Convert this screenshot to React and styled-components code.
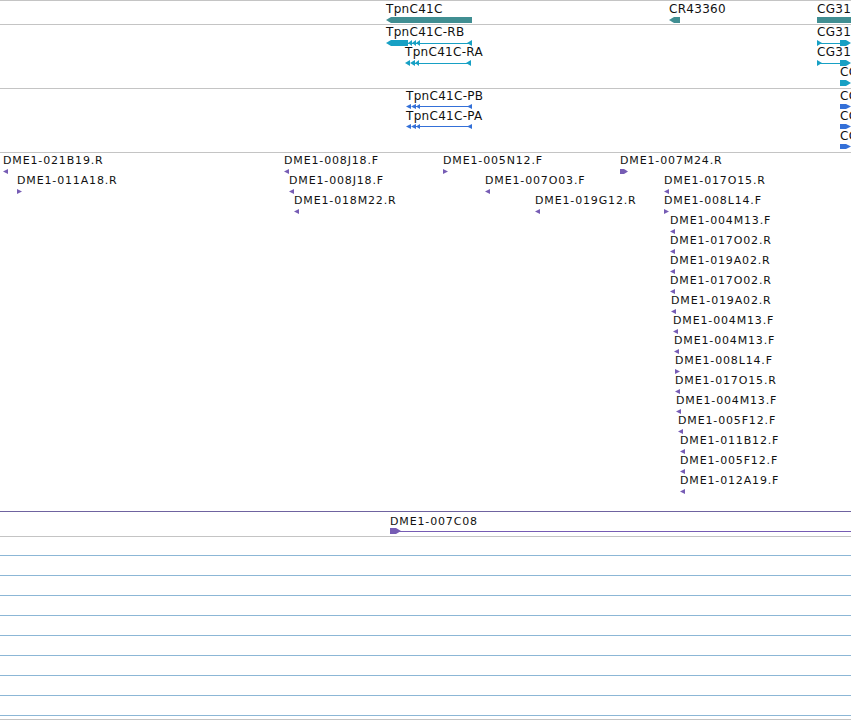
import React from 'react';
import styled, { createGlobalStyle } from 'styled-components';

const GlobalStyle = createGlobalStyle`
  html, body {
    margin: 0;
    padding: 0;
    background: #fff;
    overflow: hidden;
  }
  body {
    font-family: "DejaVu Sans", "Liberation Sans", sans-serif;
  }
`;

const Browser = styled.div`
  width: 851px;
  height: 720px;
  overflow: hidden;
  border-top: 1px solid #c4c4c4;
  display: flex;
  flex-direction: column;
`;

const Track = styled.div`
  box-sizing: border-box;
  height: ${(p) => p.$height}px;
  padding-top: ${(p) => p.$pad || 0}px;
  border-bottom: 1px solid ${(p) => p.$line || '#c4c4c4'};
  display: flex;
  flex-direction: column;
  flex-shrink: 0;
`;

const Row = styled.div`
  position: relative;
  height: ${(p) => p.$h}px;
  flex-shrink: 0;
`;

const Feature = styled.div`
  position: absolute;
  top: 0;
  display: flex;
  flex-direction: column;
  align-items: flex-start;
`;

const GeneLabel = styled.span`
  font-size: 12px;
  line-height: 14px;
  height: 14px;
  padding-top: ${(p) => p.$pad || 0}px;
  letter-spacing: 0.3px;
  white-space: nowrap;
  color: #111;
`;

const CloneLabel = styled.span`
  font-size: 11px;
  line-height: 13px;
  height: 13px;
  padding-top: ${(p) => p.$pad || 0}px;
  letter-spacing: 0.85px;
  white-space: nowrap;
  color: #111;
`;

const GlyphSvg = styled.svg`
  display: block;
  margin-top: ${(p) => p.$gap || 0}px;
  overflow: visible;
`;

const GridGap = styled.div`
  height: 18px;
  flex-shrink: 0;
`;

const GridLine = styled.div`
  box-sizing: border-box;
  height: ${(p) => p.$h || 20}px;
  border-top: 1px solid #8cb7d6;
  border-bottom: ${(p) => (p.$last ? '1px solid #c4c4c4' : 'none')};
  flex-shrink: 0;
`;

const COLORS = {
  gene: '#408e92',
  mrna: '#17a0c4',
  protein: '#3470d8',
  clone: '#765cb4',
};

const triPoints = (x, w, h, dir) =>
  dir === 'L'
    ? `${x},${h / 2} ${x + w},0 ${x + w},${h}`
    : `${x},0 ${x + w},${h / 2} ${x},${h}`;

const exonPoints = (x, w, h, dir) => {
  const t = Math.min(5, w / 2);
  return dir === 'L'
    ? `${x},${h / 2} ${x + t},0 ${x + w},0 ${x + w},${h} ${x + t},${h}`
    : `${x},0 ${x + w - t},0 ${x + w},${h / 2} ${x + w - t},${h} ${x},${h}`;
};

const Glyph = ({ width, height, color, parts, gap }) => {
  const mid = Math.floor(height / 2) + 0.5;
  return (
    <GlyphSvg width={width} height={height} $gap={gap}>
      {parts.map((p, i) => {
        if (p.k === 'line')
          return (
            <line key={i} x1={p.x1} x2={p.x2} y1={mid} y2={mid}
              stroke={color} strokeWidth="1" />
          );
        if (p.k === 'bar')
          return <rect key={i} x={p.x} y={0} width={p.w} height={height} fill={color} />;
        if (p.k === 'tri')
          return <polygon key={i} points={triPoints(p.x, p.w, height, p.d)} fill={color} />;
        return <polygon key={i} points={exonPoints(p.x, p.w, height, p.d)} fill={color} />;
      })}
    </GlyphSvg>
  );
};

const rbParts = [
  { k: 'line', x1: 20, x2: 86 },
  { k: 'exon', x: 0, w: 22, d: 'L' },
  { k: 'tri', x: 22, w: 4, d: 'L' },
  { k: 'tri', x: 26, w: 4, d: 'L' },
  { k: 'tri', x: 30, w: 4, d: 'L' },
  { k: 'tri', x: 81, w: 5, d: 'L' },
];

const shortParts = [
  { k: 'line', x1: 8, x2: 66 },
  { k: 'tri', x: 0, w: 5, d: 'L' },
  { k: 'tri', x: 5, w: 5, d: 'L' },
  { k: 'tri', x: 10, w: 4, d: 'L' },
  { k: 'tri', x: 61, w: 5, d: 'L' },
];

const cgParts = [
  { k: 'line', x1: 2, x2: 26 },
  { k: 'tri', x: 0, w: 5, d: 'R' },
  { k: 'exon', x: 23, w: 11, d: 'R' },
];

const cgHead = [{ k: 'exon', x: 0, w: 11, d: 'R' }];

const genes = [
  { x: 386, name: 'TpnC41C', w: 86, parts: [{ k: 'exon', x: 0, w: 86, d: 'L' }] },
  { x: 669, name: 'CR43360', w: 11, parts: [{ k: 'exon', x: 0, w: 11, d: 'L' }] },
  { x: 817, name: 'CG31', w: 40, parts: [{ k: 'bar', x: 0, w: 40 }] },
];

const transcripts = [
  [
    { x: 386, name: 'TpnC41C-RB', w: 86, parts: rbParts },
    { x: 817, name: 'CG31', w: 34, parts: cgParts },
  ],
  [
    { x: 405, name: 'TpnC41C-RA', w: 66, parts: shortParts },
    { x: 817, name: 'CG31', w: 34, parts: cgParts },
  ],
  [{ x: 840, name: 'CG', w: 11, parts: cgHead }],
];

const proteins = [
  [
    { x: 406, name: 'TpnC41C-PB', w: 66, parts: shortParts },
    { x: 840, name: 'CG', w: 11, parts: cgHead },
  ],
  [
    { x: 406, name: 'TpnC41C-PA', w: 66, parts: shortParts },
    { x: 840, name: 'CG', w: 11, parts: cgHead },
  ],
  [{ x: 840, name: 'CG', w: 11, parts: cgHead }],
];

const clones = [
  [
    { x: 3, n: 'DME1-021B19.R', d: 'L' },
    { x: 284, n: 'DME1-008J18.F', d: 'L' },
    { x: 443, n: 'DME1-005N12.F', d: 'R' },
    { x: 620, n: 'DME1-007M24.R', d: 'R', w: 8 },
  ],
  [
    { x: 17, n: 'DME1-011A18.R', d: 'R' },
    { x: 289, n: 'DME1-008J18.F', d: 'L' },
    { x: 485, n: 'DME1-007O03.F', d: 'L' },
    { x: 664, n: 'DME1-017O15.R', d: 'L' },
  ],
  [
    { x: 294, n: 'DME1-018M22.R', d: 'L' },
    { x: 535, n: 'DME1-019G12.R', d: 'L' },
    { x: 664, n: 'DME1-008L14.F', d: 'R' },
  ],
  [{ x: 670, n: 'DME1-004M13.F', d: 'L' }],
  [{ x: 670, n: 'DME1-017O02.R', d: 'L' }],
  [{ x: 670, n: 'DME1-019A02.R', d: 'L' }],
  [{ x: 670, n: 'DME1-017O02.R', d: 'L' }],
  [{ x: 671, n: 'DME1-019A02.R', d: 'L' }],
  [{ x: 673, n: 'DME1-004M13.F', d: 'L' }],
  [{ x: 674, n: 'DME1-004M13.F', d: 'L' }],
  [{ x: 675, n: 'DME1-008L14.F', d: 'R' }],
  [{ x: 675, n: 'DME1-017O15.R', d: 'L' }],
  [{ x: 676, n: 'DME1-004M13.F', d: 'L' }],
  [{ x: 678, n: 'DME1-005F12.F', d: 'L' }],
  [{ x: 680, n: 'DME1-011B12.F', d: 'L' }],
  [{ x: 680, n: 'DME1-005F12.F', d: 'L' }],
  [{ x: 680, n: 'DME1-012A19.F', d: 'L' }],
];

const cloneParts = (c) =>
  c.w
    ? [{ k: 'exon', x: 0, w: c.w, d: c.d }]
    : [{ k: 'tri', x: 0, w: 5, d: c.d }];

const GeneRows = ({ rows, color, glyphH, rowH }) =>
  rows.map((items, r) => (
    <Row key={r} $h={rowH}>
      {items.map((g, i) => (
        <Feature key={i} style={{ left: g.x }}>
          <GeneLabel>{g.name}</GeneLabel>
          <Glyph width={g.w} height={glyphH} color={color} parts={g.parts} gap={1} />
        </Feature>
      ))}
    </Row>
  ));

export default function App() {
  return (
    <>
      <GlobalStyle />
      <Browser>
        <Track $height={24}>
          <Row $h={23}>
            {genes.map((g, i) => (
              <Feature key={i} style={{ left: g.x }}>
                <GeneLabel $pad={1}>{g.name}</GeneLabel>
                <Glyph width={g.w} height={6} color={COLORS.gene} parts={g.parts} gap={1} />
              </Feature>
            ))}
          </Row>
        </Track>

        <Track $height={64}>
          <GeneRows rows={transcripts} color={COLORS.mrna} glyphH={6} rowH={20} />
        </Track>

        <Track $height={64}>
          <GeneRows rows={proteins} color={COLORS.protein} glyphH={5} rowH={20} />
        </Track>

        <Track $height={359} $pad={1} $line="#6f63a0">
          {clones.map((items, r) => (
            <Row key={r} $h={20}>
              {items.map((c, i) => (
                <Feature key={i} style={{ left: c.x }}>
                  <CloneLabel>{c.n}</CloneLabel>
                  <Glyph width={c.w || 5} height={5} color={COLORS.clone}
                    parts={cloneParts(c)} gap={2} />
                </Feature>
              ))}
            </Row>
          ))}
        </Track>

        <Track $height={25}>
          <Row $h={24}>
            <Feature style={{ left: 390 }}>
              <CloneLabel $pad={3}>DME1-007C08</CloneLabel>
              <Glyph width={461} height={6} color={COLORS.clone} gap={0}
                parts={[
                  { k: 'line', x1: 8, x2: 461 },
                  { k: 'exon', x: 0, w: 11, d: 'R' },
                ]} />
            </Feature>
          </Row>
        </Track>

        <GridGap />
        {Array.from({ length: 8 }).map((_, i) => (
          <GridLine key={i} />
        ))}
        <GridLine $h={5} $last />
      </Browser>
    </>
  );
}
